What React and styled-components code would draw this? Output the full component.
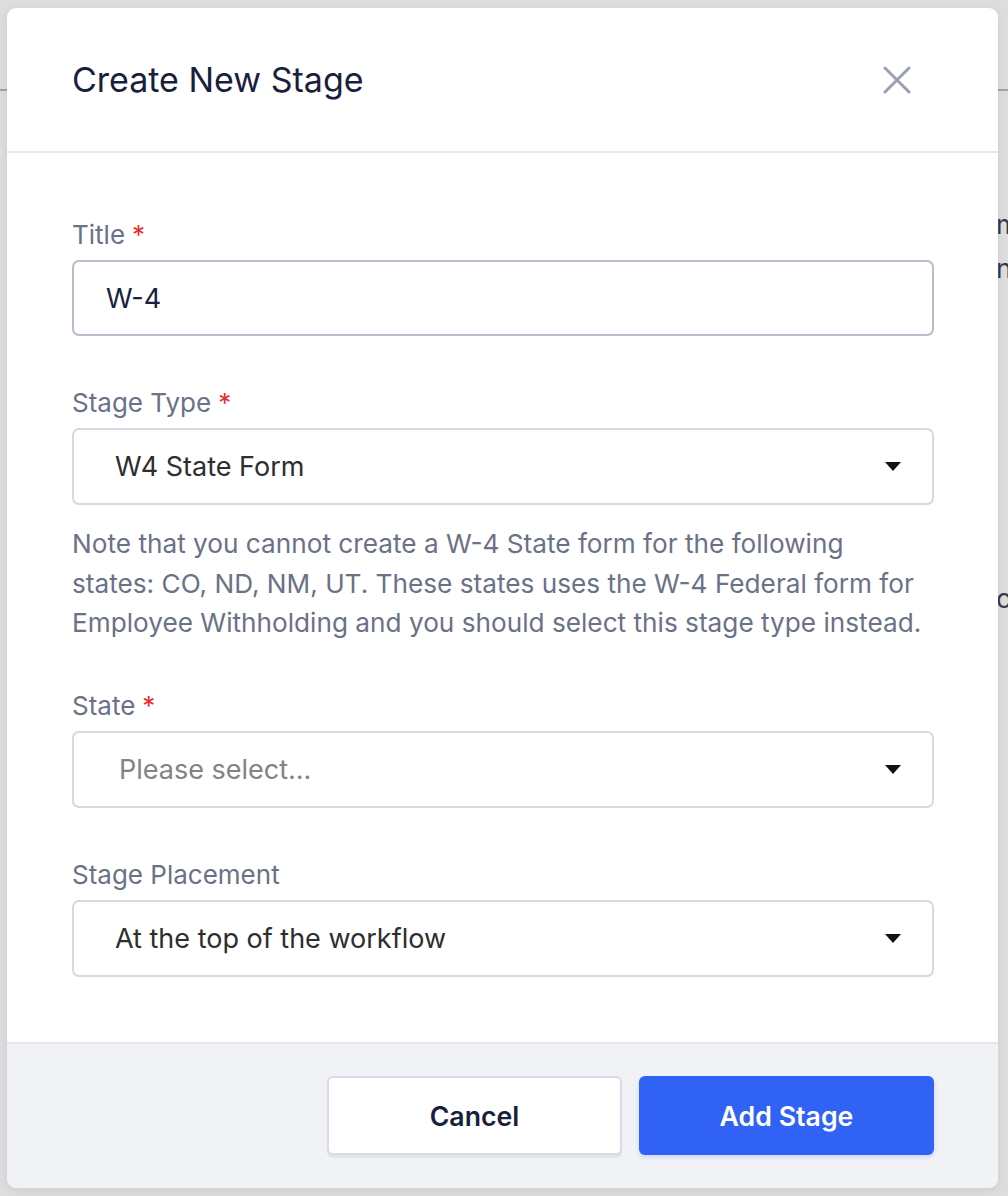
import React from "react";
import styled, { createGlobalStyle } from "styled-components";

const GlobalStyle = createGlobalStyle`
  html, body {
    margin: 0;
    padding: 0;
    background: #ffffff;
    font-family: "Inter", "Liberation Sans", sans-serif;
  }
  * { box-sizing: border-box; }
`;

const Page = styled.div`
  width: 1008px;
  height: 1196px;
  overflow: hidden;
  position: relative;
  background: #ffffff;
`;

const PageHeader = styled.div`
  height: 91px;
  border-bottom: 2px solid #b9bcc6;
`;

const PageContent = styled.div`
  display: flex;
  flex-direction: column;
  padding: 112px 0 0 996px;
  color: #3c4459;
  font-size: 27px;
  line-height: 44px;
  white-space: nowrap;
`;

const Spacer = styled.div`
  height: ${(p) => p.$h}px;
`;

const Backdrop = styled.div`
  position: absolute;
  inset: 0;
  background: rgba(0, 0, 0, 0.135);
  padding: 8px 10px 8px 7px;
`;

const Modal = styled.div`
  height: 1180px;
  background: #ffffff;
  border-radius: 9px;
  overflow: hidden;
  display: flex;
  flex-direction: column;
  box-shadow: 0 2px 8px rgba(0, 0, 0, 0.08);
`;

const ModalHeader = styled.div`
  height: 145px;
  flex-shrink: 0;
  display: flex;
  align-items: center;
  justify-content: space-between;
  padding: 0 86px 0 65px;
  border-bottom: 2px solid #e6e7ec;
`;

const ModalTitle = styled.h2`
  margin: 0;
  font-size: 34px;
  font-weight: 400;
  color: #1a1f3d;
`;

const CloseButton = styled.button`
  border: none;
  background: none;
  padding: 0;
  width: 30px;
  height: 30px;
  cursor: pointer;
  display: flex;
  align-items: center;
  justify-content: center;
`;

const Body = styled.div`
  flex: 1;
  padding: 65px 64px 0 65px;
  display: flex;
  flex-direction: column;
`;

const Field = styled.div`
  display: flex;
  flex-direction: column;
  margin-bottom: ${(p) => p.$gap}px;
`;

const Label = styled.label`
  font-size: 26px;
  line-height: 34px;
  color: #6b7186;
  margin-bottom: 8px;
`;

const Required = styled.span`
  color: #e3322b;
  margin-left: 7px;
`;

const TextInput = styled.input`
  height: 76px;
  border: 2px solid #b8bccb;
  border-radius: 7px;
  padding: 0 32px;
  font-family: inherit;
  font-size: 27px;
  color: #1a1f3d;
  outline: none;
`;

const SelectBox = styled.div`
  height: 77px;
  border: 2px solid #d6d9e2;
  border-radius: 7px;
  display: flex;
  align-items: center;
  justify-content: space-between;
  padding: 0 31px 0 ${(p) => (p.$placeholder ? 45 : 41)}px;
  font-size: 27px;
  color: ${(p) => (p.$placeholder ? "#838383" : "#2e2e2e")};
  cursor: pointer;
`;

const Caret = styled.span`
  width: 0;
  height: 0;
  border-left: 8px solid transparent;
  border-right: 8px solid transparent;
  border-top: 9px solid #111111;
`;

const Note = styled.p`
  margin: 19px 0 46px;
  max-width: 852px;
  font-size: 26.2px;
  line-height: 39.5px;
  color: #6b7186;
`;

const Footer = styled.div`
  height: 146px;
  flex-shrink: 0;
  background: #f1f2f6;
  border-top: 2px solid #e6e7ec;
  display: flex;
  justify-content: flex-end;
  align-items: flex-start;
  gap: 17px;
  padding: 32px 64px 0 0;
`;

const Button = styled.button`
  width: 295px;
  height: 79px;
  border-radius: 6px;
  font-family: inherit;
  font-size: 26.7px;
  font-weight: 600;
  cursor: pointer;
  border: ${(p) => (p.$primary ? "none" : "2px solid #dadce5")};
  background: ${(p) => (p.$primary ? "#2f62f5" : "#ffffff")};
  color: ${(p) => (p.$primary ? "#ffffff" : "#1a1f3d")};
  box-shadow: ${(p) =>
    p.$primary ? "0 2px 4px rgba(47, 98, 245, 0.2)" : "0 3px 0 #e2e4ea"};
`;

const Select = ({ value, placeholder }) => (
  <SelectBox $placeholder={!value}>
    <span>{value || placeholder}</span>
    <Caret />
  </SelectBox>
);

export default function App() {
  return (
    <Page>
      <GlobalStyle />
      <PageHeader />
      <PageContent>
        <span>m</span>
        <span>ne</span>
        <Spacer $h={286} />
        <span>oo</span>
      </PageContent>
      <Backdrop>
        <Modal>
          <ModalHeader>
            <ModalTitle>Create New Stage</ModalTitle>
            <CloseButton aria-label="Close">
              <svg width="28" height="28" viewBox="0 0 28 28">
                <path
                  d="M2 2 L26 26 M26 2 L2 26"
                  stroke="#9aa0b3"
                  strokeWidth="3"
                  strokeLinecap="round"
                />
              </svg>
            </CloseButton>
          </ModalHeader>
          <Body>
            <Field $gap={50}>
              <Label>
                Title<Required>*</Required>
              </Label>
              <TextInput defaultValue="W-4" />
            </Field>
            <Field $gap={0}>
              <Label>
                Stage Type<Required>*</Required>
              </Label>
              <Select value="W4 State Form" />
            </Field>
            <Note>
              Note that you cannot create a W-4 State form for the following
              states: CO, ND, NM, UT. These states uses the W-4 Federal form for
              Employee Withholding and you should select this stage type
              instead.
            </Note>
            <Field $gap={50}>
              <Label>
                State<Required>*</Required>
              </Label>
              <Select placeholder="Please select..." />
            </Field>
            <Field $gap={0}>
              <Label>Stage Placement</Label>
              <Select value="At the top of the workflow" />
            </Field>
          </Body>
          <Footer>
            <Button>Cancel</Button>
            <Button $primary>Add Stage</Button>
          </Footer>
        </Modal>
      </Backdrop>
    </Page>
  );
}
